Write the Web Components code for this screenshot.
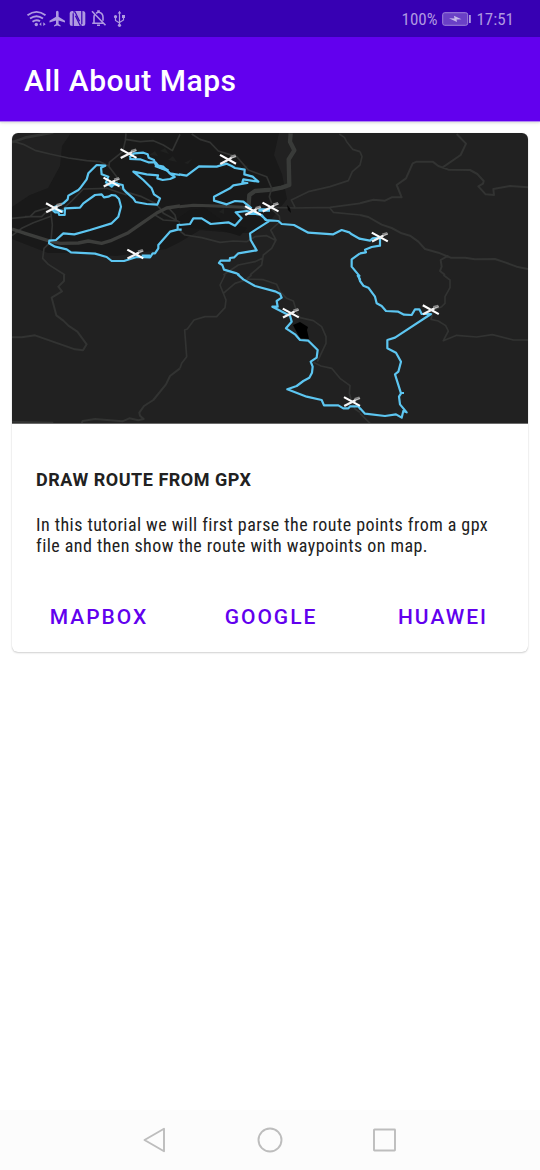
<!DOCTYPE html>
<html lang="en">
<head>
<meta charset="utf-8">
<title>All About Maps</title>
<style>
html,body{margin:0;height:100%;background:#fff}
</style>
</head>
<body>
<maps-app></maps-app>
<script>
const define = (name, html) => customElements.define(name, class extends HTMLElement {
  constructor() {
    super();
    this.attachShadow({ mode: 'open' }).innerHTML = html;
  }
});

define('status-bar', `
<style>
:host{display:flex;box-sizing:border-box;height:37px;flex:none;padding:0 26px 0 27px;align-items:center;justify-content:space-between;background:#3700b3;color:#af99e1;font:400 17px/20px "Roboto Condensed",Roboto,sans-serif;font-stretch:75%}
div{display:flex;align-items:center;padding-top:1px}
.r{gap:5px;padding:0}
svg{display:block}
</style>
<div><svg width="100" height="22" viewBox="27 8 100 22" fill="none" stroke="#af99e1" stroke-width="1.6">
<path d="M27.500 15.300Q36.500 8.500 45.500 15.300M30 18.600Q36.500 13.800 43 18.600M32.500 21.800Q36.500 19 40 21.300" stroke-width="1.9"/><circle cx="36.300" cy="24.500" r="1.700" fill="#af99e1" stroke="none"/><path d="M41.300 22.300v3.800l-2-1.900zM43.300 22.300v3.800l2.300-1.900z" fill="#af99e1" stroke="none"/>
<path d="M57.300 10.800c-.9 0-1.300.8-1.300 1.700v4.200l-6.500 4.100v1.700l6.500-2v3.600l-2 1.300v1l3.300-.8 3.300.8v-1l-2-1.300v-3.600l6.400 2v-1.700l-6.400-4.100v-4.200c0-.9-.5-1.700-1.300-1.700z" fill="#af99e1" stroke="none"/>
<rect x="69.700" y="10.900" width="15.600" height="15.200" rx="2.500" fill="#af99e1" stroke="none"/><path d="M74.600 26.500H73.200V13.200M73.200 11.800H75l4.600 9.500M80.400 10.500h1.400V24M81.800 25.200H80L75.400 15.700" stroke="#3700b3" stroke-width="1.200"/>
<path d="M92 11.200l13.500 14M92.200 23.200h10.300M94 23v-6q0-1.500.8-2.600M96 13.200l2-1V11h1v1.200c3 .8 4 2.800 4 5v3.500M97 25.300h3" stroke-width="1.600"/>
<path d="M119.500 12.500V26M115.500 17v3.500l4 2.500M123.500 16v4l-4 2.500" stroke-width="1.200"/><path d="M117.700 13.500l1.800-2.800 1.800 2.800zM122 15h3v3h-3z" fill="#af99e1" stroke="none"/><circle cx="115.500" cy="16.700" r="1.600" fill="#af99e1" stroke="none"/><circle cx="119.500" cy="25.300" r="1.600" fill="#af99e1" stroke="none"/>
</svg></div>
<div class="r"><span>100%</span><svg width="29" height="14" viewBox="0 0 29 14"><rect x=".7" y=".7" width="25" height="12.600" rx="2" fill="#6a40c6" stroke="#9f84da"/><path d="M7 6.300l5.500.200-.6-2.700L19.500 7.300l-5 .3.500 2.500z" fill="#c7b8ea"/><rect x="27" y="3" width="1.800" height="8" fill="#af99e1"/></svg><span>17:51</span></div>`);

define('top-app-bar', `
<style>
:host{display:flex;box-sizing:border-box;height:84px;flex:none;padding:4px 24px 0;align-items:center;background:#6200ee;color:#fff;box-shadow:0 1px 0 #b28af0,0 2px 2px rgba(0,0,0,.1),0 2px 5px rgba(0,0,0,.06);font:500 30px/36px Roboto,sans-serif;letter-spacing:.52px}
</style><slot></slot>`);

const icons = [[128.500,153.500],[228,159.300],[111.500,182],[54,207.700],[135.300,254],[253,210.500],[270.500,207],[379.800,237],[290.800,313],[430.800,309.700],[352,401.500]]
  .map(([x, y]) => `<g transform="translate(${x} ${y})"><path d="M1 -.5L8 -3.200" stroke="#bbb" stroke-width="1.700"/><path d="M2.500 -2.800l5-1.400" stroke="#8a8a8a" stroke-width="1.700"/><path d="M-8 -4.400L8 4.400" stroke="#fff" stroke-width="2.200"/><path d="M-7.800 4.600L3.500 -1.200" stroke="#f2f2f2" stroke-width="2.300"/></g>`).join('');

define('route-map', `
<style>:host{display:block;height:291px;background:#212121}svg{display:block;width:100%;height:100%}</style>
<svg viewBox="12 133 516 291" fill="none" stroke-linejoin="round">
<path d="M71 133l-9 13-2 20-12 22-18 7-18 12v32l36 14h20l48 3 50-7 14-7 20-12 35 3 20 0 15-12 17-22-5-25-8-19 5-22 11-8-3-16z" fill="#191919"/>
<path d="M176 220l14-10 15-2 20 15 22 5-7 8-20-6-42-3z" fill="#171717"/>
<path d="M149 155l6-4 3 5zM160 151l5-3 4 6zM168 160l5-4 4 6zM184 163l8-4-4 5zM219 212l5-4v6zM240 169l8-4-3 8z" fill="#202120"/>
<!-- Each group covers one tile, drawn at three units per pixel. -->
<g stroke="#323332" stroke-width="6">
<g transform="translate(0 125) scale(.333333)">
<path d="M36 52L75 38 160 22" stroke-width="8"/><path d="M36 48L70 58 105 76 150 87 205 99 260 107 300 110 325 122 350 155 352 180 375 200 425 215 465 235 480 250 490 265 540 292M378 25L376 47 368 80 328 112 327 125M376 43L420 50 460 47 490 60 517 77 540 28M36 280L90 275 105 260 145 248M75 275H125L140 260 180 260 215 228 250 192 320 190 380 210M36 332L65 310 100 293 155 273M153 265L157 300 153 350 132 370 128 400 145 418 195 450M465 270L490 285 530 288M505 248L525 270 530 290" stroke-width="5"/>
<path d="M36 312L75 325 145 347 180 355 235 354 265 348 305 355 335 346 385 323 425 295 470 264 500 249 540 243" stroke="#3c3d3b" stroke-width="10"/>
</g>
<g transform="translate(180 125) scale(.333333)">
<path d="M-2 245L40 241 90 242 190 247 215 258" stroke="#3b3c3a" stroke-width="9"/>
<path d="M332 25L330 50 343 76 326 103 328 180 305 188 275 194 225 198 208 210 205 250" stroke="#393b39" stroke-width="13"/>
<path d="M35 27L60 43 90 52 115 78 170 95 205 135 260 155 275 190 268 215 275 235M275 247L345 249 450 247 540 235M345 247L334 225 385 200 450 185 505 167 517 140 540 120 546 95 540 80M478 27L493 37 500 50 518 73 540 80M450 250L460 262 540 270M272 250L298 273 300 290 272 315 288 345 275 370 250 390 245 420 210 450M0 318L15 330 65 338 120 352 160 348 200 350 225 335 260 332 285 345M250 398L225 410 175 420 130 450" stroke-width="5"/>
</g>
<g transform="translate(360 125) scale(.333333)">
<path d="M290 27L318 56 302 90 248 127M0 235L40 224 75 227 95 217H125L110 180 138 160 158 115 170 110 218 110 235 123 265 134 330 135 352 147 371 168 369 176 355 184 377 208 402 210 400 192 450 183 504 187M0 270L25 276 65 299 95 309 125 325 150 332 175 350 195 372 235 383 272 398 315 398 345 403 405 402 435 412 470 425 504 432M265 392L242 405 245 425 240 438 255 450"/>
</g>
<g transform="translate(0 275) scale(.333333)">
<path d="M192 0V18L175 35 186 49 155 68 169 121 190 137 205 152 232 170 260 208 249 226 225 223 105 181 65 187H36M540 280L510 303 498 328 460 375 432 393 418 413 420 422 431 432 415 436 388 430 367 439 285 432 248 438 245 445M36 440L160 443"/>
</g>
<g transform="translate(180 275) scale(.333333)" stroke-width="5">
<path d="M135 0L120 30 138 75 135 98 110 125 75 125 42 135 22 162 14 165 20 245 5 265 0 280M130 55L165 25 205 12 250 14 290 28 300 50 320 70 340 78 350 110 360 128 400 137 425 155 438 185 438 205 412 260M400 262L423 273 455 280 480 310 510 332 508 355 515 380 525 402 540 412M215 0L200 12"/>
</g>
<g transform="translate(360 275) scale(.333333)">
<path d="M250 0L270 15V38L255 65 255 85 245 95 220 106 213 133 235 138 257 152 265 168 250 197 290 181 350 186 397 179 460 195H504M0 415L30 445" stroke-width="5"/>
</g></g>
<path d="M293 325l7-3 8 5-1 3 2 9-9-1-5-9z" fill="#000"/><path d="M287 205l3 3 1 5-3-3z" fill="#080808"/>
<g stroke="#5dc6f1" stroke-width="6.6">
<g transform="translate(0 125) scale(.333333)">
<path d="M388 98L402 85 430 83 443 88 446 98 462 105 467 120 490 125 510 145 540 150M388 102L420 103 445 112 467 112 480 128 498 133 508 144 524 156 510 162 488 165 472 160 474 151 440 148 400 140 430 165 455 190 462 208 480 220 472 239 440 237 407 231 400 220 380 203 370 192 368 180 345 175 335 185 318 172 325 155 305 148 303 128 316 122 290 120 265 145 260 163 240 190 235 195 205 212 203 223 190 235 165 245 158 255 165 262 175 262 178 270 194 270 195 250 240 248 250 235 285 210 305 208 312 217 325 215 335 210 347 212 357 222 363 245 355 275 335 295 270 315 223 328 190 325 168 345 148 347 147 355 165 365 200 373 213 382 285 386 320 396 335 408 372 408 410 396 450 397 458 385 465 385 475 370 475 360 510 320 533 314 533 300 541 299"/>
<path d="M162 252L190 260M325 177H353M425 393H450M465 122L505 137" stroke-width="9"/>
</g>
<g transform="translate(180 125) scale(.333333)">
<path d="M-3 148L20 152 57 124 110 125 140 116 155 123 165 129 194 134 193 148 218 155 235 170 190 163 187 172 202 174 160 181 150 190 102 215 102 227 140 238 165 228 190 230 215 250M0 300L30 297 40 280 65 280 92 297 145 292 165 302 185 280 167 262 200 258 240 268 265 290 210 325 212 345 230 376 175 385 163 397 150 399 149 407 122 407 117 414 127 420 132 434 170 445 178 450M215 265L245 270 257 285 295 288 305 297 342 300 385 323 460 328 485 315 508 322 515 328 540 342M540 385L515 403V425L540 455M-5 314H5"/>
<path d="M205 265H230M235 255H270" stroke-width="10"/>
</g>
<g transform="translate(360 125) scale(.333333)"><path d="M-2 341L30 347 38 340 60 338V362L35 366 15 374 18 382 0 385"/></g>
<g transform="translate(180 275) scale(.333333)"><path d="M173 -2L190 13 225 33 285 49 300 56 305 68 297 73 290 78 293 95 277 95 330 122 335 140 318 160 345 178 360 195 385 197 413 225 410 248 392 260 398 275 396 293 388 308 370 318 350 333 322 343 380 365 425 375 432 391 475 391 490 400 505 400 510 394 535 394 541 402M532 0L541 15"/></g>
<g transform="translate(360 275) scale(.333333)"><path d="M-4 3L0 18 10 32 25 38 45 65 50 85 65 93 78 108 115 110 132 119 155 120 165 103 178 103 185 117 213 117 105 188 82 195V220L108 233 123 260 115 290 105 298 123 355 117 365 120 388 140 412 130 408 125 428 108 418 75 423 15 416 0 400M120 354H132"/></g>
</g>
${icons}
<path d="M12 423.500H528" stroke="#6a6a6a" stroke-width="1"/>
</svg>`);

define('text-button', `
<style>
:host{display:flex;box-sizing:border-box;height:48px;flex:1;padding:1px 0 0 2px;align-items:center;justify-content:center;color:#6200ee;font:500 21px/24px Roboto,sans-serif;letter-spacing:2px}
</style><slot></slot>`);

define('tutorial-card', `
<style>
:host{display:flex;box-sizing:border-box;flex-direction:column;height:519px;margin:12px 12px 0;border-radius:6px;overflow:hidden;background:#fff;box-shadow:0 1px 2px rgba(0,0,0,.18),0 0 1px rgba(0,0,0,.15)}
.body{display:flex;flex-direction:column;gap:22px;padding:44px 24px 0;color:#212121}
h2{margin:0;font:700 18px/24px Roboto,sans-serif;letter-spacing:.52px}
p{margin:0;font:400 18px/21px "Roboto Condensed",Roboto,sans-serif;font-stretch:75%;letter-spacing:.445px}
.actions{display:flex;padding:0 0 12px;margin-top:auto}
</style>
<route-map></route-map>
<div class="body"><h2><slot name="title"></slot></h2><p><slot name="text"></slot></p></div>
<div class="actions"><slot name="action"></slot></div>`);

define('navigation-bar', `
<style>
:host{display:flex;height:60px;flex:none;margin-top:auto;align-items:center;justify-content:center;gap:89px;background:#fcfcfc}
svg{display:block;width:26px;height:26px;fill:none;stroke:#bdbdbd;stroke-width:1.900;stroke-linejoin:round}
</style>
<svg viewBox="0 0 26 26"><path d="M2.500 13L22 1.800V24.200Z"/></svg>
<svg viewBox="0 0 26 26"><circle cx="13" cy="13" r="11.500"/></svg>
<svg viewBox="0 0 26 26"><rect x="2" y="2.500" width="21" height="21" rx=".5"/></svg>`);

define('maps-app', `
<style>:host{display:flex;flex-direction:column;width:540px;height:1170px;overflow:hidden;background:#fff}</style>
<status-bar></status-bar>
<top-app-bar>All About Maps</top-app-bar>
<tutorial-card>
<span slot="title">DRAW ROUTE FROM GPX</span>
<span slot="text">In this tutorial we will first parse the route points from a gpx<br>file and then show the route with waypoints on map.</span>
<text-button slot="action">MAPBOX</text-button><text-button slot="action">GOOGLE</text-button><text-button slot="action">HUAWEI</text-button>
</tutorial-card>
<navigation-bar></navigation-bar>`);
</script>
</body>
</html>
